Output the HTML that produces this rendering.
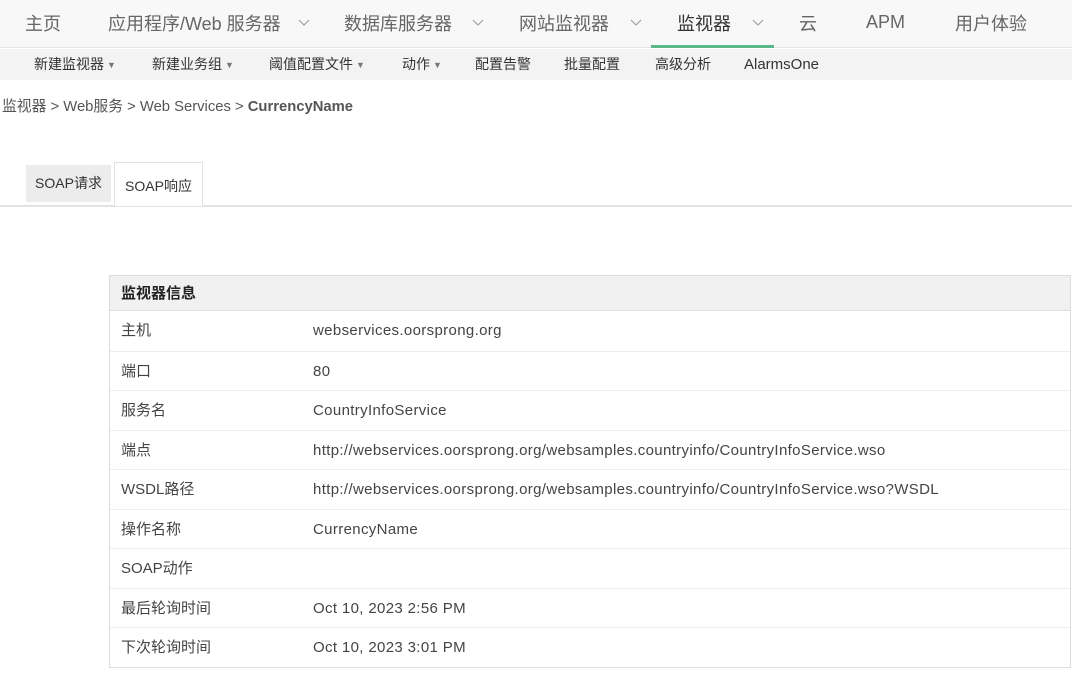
<!DOCTYPE html>
<html><head><meta charset="utf-8"><style>
*{margin:0;padding:0;box-sizing:border-box}
body{width:1072px;height:686px;background:#fff;font-family:"Liberation Sans","Noto Sans CJK SC",sans-serif;color:#333;position:relative;overflow:hidden}
.top{position:absolute;left:0;top:0;width:1072px;height:48px;background:#f8f8f8;border-bottom:1px solid #e4e4e4}
.top span{position:absolute;top:12px;font-size:18px;color:#666;white-space:nowrap;line-height:24px}
.top svg{position:absolute;top:19px}
.ul{position:absolute;left:651px;top:45px;width:123px;height:3px;background:#5cb88a}
.sub{position:absolute;left:0;top:49px;width:1072px;height:31px;background:#f3f3f3}
.sub span{position:absolute;top:5px;font-size:14px;color:#333;line-height:20px;white-space:nowrap}
.sub i{font-style:normal;font-size:9px;color:#777;margin-left:3px;vertical-align:1px}
.wh{position:absolute;left:0;top:80px;width:1072px;height:606px;background:#fff;border-top-left-radius:6px}
.bc{position:absolute;left:2px;top:97px;font-size:14.8px;color:#555;line-height:20px}
.bc b{color:#555}
.tab{position:absolute;top:165px;height:37px;font-size:14px;line-height:37px;text-align:center;color:#333}
.tline{position:absolute;left:0;top:205px;width:1072px;height:2px;background:#e2e2e2}
.tbl{position:absolute;left:109px;top:275px;width:962px;height:393px;border:1px solid #ddd;font-size:15px}
.th{height:35px;background:#f1f1f1;border-bottom:1px solid #ddd;font-weight:bold;color:#222;line-height:35px;padding-left:11px}
.r{position:relative;height:39.5px;border-top:1px solid #eee;color:#444}
.r:nth-child(2){border-top:none}
.r .a{position:absolute;left:11px;top:10px;line-height:20px}
.r .b{position:absolute;left:203px;top:10px;line-height:20px;letter-spacing:.35px;white-space:nowrap}
</style></head><body>
<div class="top">
<span style="left:25px">主页</span>
<span style="left:108px">应用程序/Web 服务器</span><svg style="left:298px" width="12" height="8"><path d="M1 1L6 6L11 1" fill="none" stroke="#999" stroke-width="1"/></svg>
<span style="left:344px">数据库服务器</span><svg style="left:472px" width="12" height="8"><path d="M1 1L6 6L11 1" fill="none" stroke="#999" stroke-width="1"/></svg>
<span style="left:519px">网站监视器</span><svg style="left:630px" width="12" height="8"><path d="M1 1L6 6L11 1" fill="none" stroke="#999" stroke-width="1"/></svg>
<span style="left:677px;color:#333">监视器</span><svg style="left:752px" width="12" height="8"><path d="M1 1L6 6L11 1" fill="none" stroke="#999" stroke-width="1"/></svg>
<span style="left:799px">云</span>
<span style="left:866px;top:10px">APM</span>
<span style="left:955px">用户体验</span>
<div class="ul"></div>
</div>
<div class="sub">
<span style="left:34px">新建监视器<i>▼</i></span>
<span style="left:152px">新建业务组<i>▼</i></span>
<span style="left:269px">阈值配置文件<i>▼</i></span>
<span style="left:402px">动作<i>▼</i></span>
<span style="left:475px">配置告警</span>
<span style="left:564px">批量配置</span>
<span style="left:655px">高级分析</span>
<span style="left:744px;font-size:15px;top:6px">AlarmsOne</span>
</div>
<div class="wh"></div>
<div class="bc">监视器 &gt; Web服务 &gt; Web Services &gt; <b>CurrencyName</b></div>
<div class="tab" style="left:26px;width:85px;background:#ececec">SOAP请求</div>
<div class="tab" style="left:114px;width:89px;top:162px;height:44px;line-height:46px;border:1px solid #e2e2e2;border-bottom:none;background:#fff;z-index:2">SOAP响应</div>
<div class="tline"></div>
<div class="tbl">
<div class="th">监视器信息</div>
<div class="r"><div class="a">主机</div><div class="b">webservices.oorsprong.org</div></div>
<div class="r"><div class="a">端口</div><div class="b">80</div></div>
<div class="r"><div class="a">服务名</div><div class="b">CountryInfoService</div></div>
<div class="r"><div class="a">端点</div><div class="b">http://webservices.oorsprong.org/websamples.countryinfo/CountryInfoService.wso</div></div>
<div class="r"><div class="a">WSDL路径</div><div class="b">http://webservices.oorsprong.org/websamples.countryinfo/CountryInfoService.wso?WSDL</div></div>
<div class="r"><div class="a">操作名称</div><div class="b">CurrencyName</div></div>
<div class="r"><div class="a">SOAP动作</div><div class="b"></div></div>
<div class="r"><div class="a">最后轮询时间</div><div class="b">Oct 10, 2023 2:56 PM</div></div>
<div class="r"><div class="a">下次轮询时间</div><div class="b">Oct 10, 2023 3:01 PM</div></div>
</div>
</body></html>
